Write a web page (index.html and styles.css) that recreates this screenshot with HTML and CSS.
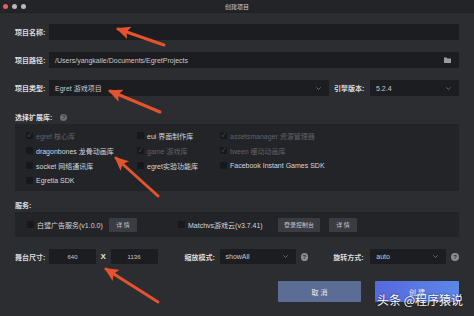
FILE: index.html
```html
<!DOCTYPE html>
<html lang="zh-CN">
<head>
  <meta charset="UTF-8" />
  <meta name="viewport" content="width=device-width, initial-scale=1.0" />
  <title>创建项目</title>
  <link rel="stylesheet" href="styles.css">
</head>
<body>

  <div class="window">

    <!-- Title bar -->
    <div class="titlebar">
      <div class="dots">
        <span class="dot red"></span>
        <span class="dot"></span>
        <span class="dot"></span>
      </div>
      <div class="title">创建项目</div>
      <div></div>
    </div>

    <!-- Form -->
    <div class="form">
      <div class="row">
        <span class="label">项目名称:</span>
        <div class="field"></div>
      </div>

      <div class="row">
        <span class="label">项目路径:</span>
        <div class="field">
          <span class="value">/Users/yangkaile/Documents/EgretProjects</span>
          <svg class="folder" width="7" height="6" viewBox="0 0 7 6"><path d="M0 0.5h2.6l0.8 1H7V6H0z" fill="#9a9ba0"/></svg>
        </div>
      </div>

      <div class="row">
        <span class="label">项目类型:</span>
        <div class="field select">
          <span class="value">Egret 游戏项目</span>
          <svg class="chev" width="5" height="3" viewBox="0 0 5 3"><path d="M0.3 0.3L2.5 2.5L4.7 0.3" fill="none" stroke="#77787d" stroke-width="0.8"/></svg>
        </div>
        <span class="label inline">引擎版本:</span>
        <div class="field select version">
          <span class="value">5.2.4</span>
          <svg class="chev" width="5" height="3" viewBox="0 0 5 3"><path d="M0.3 0.3L2.5 2.5L4.7 0.3" fill="none" stroke="#77787d" stroke-width="0.8"/></svg>
        </div>
      </div>

      <div class="section-title">选择扩展库: <span class="help">?</span></div>
      <div class="box libs">
        <div class="check disabled"><span class="box-tick on">✓</span>egret 核心库</div>
        <div class="check"><span class="box-tick"></span>eui 界面制作库</div>
        <div class="check disabled"><span class="box-tick on">✓</span>assetsmanager 资源管理器</div>

        <div class="check"><span class="box-tick"></span>dragonbones 龙骨动画库</div>
        <div class="check disabled"><span class="box-tick on">✓</span>game 游戏库</div>
        <div class="check disabled"><span class="box-tick on">✓</span>tween 缓动动画库</div>

        <div class="check"><span class="box-tick"></span>socket 网络通讯库</div>
        <div class="check"><span class="box-tick"></span>egret实验功能库</div>
        <div class="check"><span class="box-tick"></span>Facebook Instant Games SDK</div>

        <div class="check"><span class="box-tick"></span>Egretia SDK</div>
      </div>

      <div class="section-title services-title">服务:</div>
      <div class="box services">
        <div class="service first">
          <span class="box-tick"></span>
          <span class="service-name">白鹭广告服务(v1.0.0)</span>
          <button class="small-btn">详 情</button>
        </div>
        <div class="service">
          <span class="box-tick"></span>
          <span class="service-name wide">Matchvs游戏云(v3.7.41)</span>
          <button class="small-btn console">登录控制台</button>
          <button class="small-btn">详 情</button>
        </div>
      </div>

      <div class="row stage">
        <span class="label">舞台尺寸:</span>
        <div class="field size">640</div>
        <span class="times">X</span>
        <div class="field size">1136</div>

        <span class="label scale-label">缩放模式:</span>
        <div class="field select mode">
          <span class="value">showAll</span>
          <svg class="chev" width="5" height="3" viewBox="0 0 5 3"><path d="M0.3 0.3L2.5 2.5L4.7 0.3" fill="none" stroke="#77787d" stroke-width="0.8"/></svg>
        </div>
        <span class="help big">?</span>

        <span class="label rotate-label">旋转方式:</span>
        <div class="field select mode">
          <span class="value">auto</span>
          <svg class="chev" width="5" height="3" viewBox="0 0 5 3"><path d="M0.3 0.3L2.5 2.5L4.7 0.3" fill="none" stroke="#77787d" stroke-width="0.8"/></svg>
        </div>
        <span class="help big">?</span>
      </div>

      <div class="actions">
        <button class="btn cancel">取 消</button>
        <button class="btn create">创 建</button>
      </div>
    </div>

    <!-- Annotation arrows drawn over the screenshot -->
    <svg class="arrows" width="474" height="316" viewBox="0 0 474 316">
      <defs>
        <marker id="head" markerUnits="userSpaceOnUse" markerWidth="15" markerHeight="13" refX="12" refY="6.5" orient="auto">
          <path d="M0 0L14 6.5L0 13L3 6.5z" fill="#e4532d"/>
        </marker>
      </defs>
      <line x1="164" y1="45" x2="118" y2="29" stroke="#e4532d" stroke-width="3" stroke-linecap="round" marker-end="url(#head)"/>
      <line x1="160" y1="112" x2="110" y2="91" stroke="#e4532d" stroke-width="3" stroke-linecap="round" marker-end="url(#head)"/>
      <line x1="158" y1="196" x2="116" y2="158" stroke="#e4532d" stroke-width="3" stroke-linecap="round" marker-end="url(#head)"/>
      <line x1="158" y1="302" x2="106" y2="269" stroke="#e4532d" stroke-width="3" stroke-linecap="round" marker-end="url(#head)"/>
    </svg>

    <div class="watermark">头条 @程序猿说</div>
  </div>

</body>
</html>
```

FILE: styles.css
```css
body {
  margin: 0;
  padding: 0;
  background: #2c2d31;
  font-family: "Liberation Sans", "Noto Sans CJK SC", sans-serif;
  color: #d8d8da;
}

.window {
  position: relative;
  width: 474px;
  height: 316px;
  overflow: hidden;
  background: #2c2d31;
}

.titlebar {
  height: 12px;
  background: #232428;
  display: grid;
  grid-template-columns: 1fr auto 1fr;
  align-items: center;
  border-bottom: 1px solid #1f2023;
}

.dots {
  display: flex;
  gap: 4px;
  padding-left: 3px;
}

.dot {
  width: 5px;
  height: 5px;
  border-radius: 50%;
  background: #b9b9bc;
}

.dot.red {
  background: #e2625d;
}

.title {
  font-size: 6px;
  color: #cfcfd2;
}

.form {
  padding: 0 15px;
}

.row {
  display: flex;
  align-items: center;
  height: 16px;
  margin-top: 12px;
}

.row:first-child {
  margin-top: 11px;
}

.label {
  width: 34px;
  flex: none;
  font-size: 7px;
  font-weight: bold;
  color: #dcdcde;
}

.label.inline {
  width: 36px;
  margin-left: 5px;
}

.field {
  flex: 1;
  height: 100%;
  background: #1c1d21;
  display: flex;
  align-items: center;
  padding: 0 7px 0 6px;
  font-size: 7px;
  color: #c9c9cc;
  box-sizing: border-box;
}

.field .value {
  flex: 1;
}

.folder {
  margin-right: 1px;
}

.chev {
  margin-right: 1px;
}

.field.version {
  flex: none;
  width: 89px;
}

.section-title {
  display: flex;
  align-items: center;
  gap: 8px;
  height: 12px;
  margin-top: 15px;
  font-size: 7px;
  font-weight: bold;
  color: #dcdcde;
}

.section-title.services-title {
  margin-top: 8px;
}

.help {
  width: 7px;
  height: 7px;
  border-radius: 50%;
  background: #6e6f74;
  color: #2c2d31;
  font-size: 5px;
  font-weight: bold;
  display: flex;
  align-items: center;
  justify-content: center;
}

.box {
  margin-top: 1px;
  background: #232428;
}

.libs {
  height: 67px;
  box-sizing: border-box;
  padding: 4px 0 0 11px;
  display: grid;
  grid-template-columns: 111px 83px 1fr;
  grid-auto-rows: 15px;
}

.check {
  display: flex;
  align-items: center;
  gap: 3px;
  font-size: 7px;
  color: #d6d6d8;
}

.check.disabled {
  color: #606166;
}

.box-tick {
  width: 7px;
  height: 7px;
  flex: none;
  background: #17181b;
  border-radius: 1px;
  font-size: 6px;
  line-height: 7px;
  text-align: center;
  color: #5a5b60;
}

.services {
  height: 25px;
  display: flex;
  align-items: center;
  padding-left: 12px;
}

.service {
  display: flex;
  align-items: center;
}

.service.first {
  width: 151px;
}

.service .box-tick {
  margin-right: 3px;
}

.service-name {
  font-size: 7px;
  color: #d6d6d8;
  width: 72px;
}

.service-name.wide {
  width: 90px;
}

.small-btn {
  height: 14px;
  width: 28px;
  border: none;
  border-radius: 1px;
  background: #3b3c41;
  color: #c6c6c9;
  font-family: inherit;
  font-size: 6px;
  padding: 0;
  margin-right: 9px;
}

.small-btn.console {
  width: 42px;
}

.row.stage {
  height: 15px;
  margin-top: 12px;
}

.field.size {
  flex: none;
  width: 47px;
  justify-content: center;
  padding: 0;
  font-size: 6px;
}

.times {
  width: 15px;
  text-align: center;
  font-size: 8px;
  font-weight: bold;
  color: #e0e0e2;
}

.scale-label {
  margin-left: 27px;
  width: 35px;
}

.rotate-label {
  margin-left: 25px;
  width: 37px;
}

.field.mode {
  flex: none;
  width: 76px;
}

.help.big {
  width: 8px;
  height: 8px;
  margin-left: 5px;
  background: #8b8c90;
  font-size: 6px;
}

.actions {
  display: flex;
  justify-content: flex-end;
  gap: 14px;
  margin-top: 17px;
}

.btn {
  height: 21px;
  width: 83px;
  border: none;
  border-radius: 1px;
  color: #e9ecf5;
  font-family: inherit;
  font-size: 7px;
  padding: 0;
}

.btn.cancel {
  background: #5b6d94;
}

.btn.create {
  width: 84px;
  background: linear-gradient(90deg, #5669dc, #5b87e8);
}

.arrows {
  position: absolute;
  left: 0;
  top: 0;
  pointer-events: none;
}

.watermark {
  position: absolute;
  left: 377px;
  top: 291px;
  font-family: "Noto Sans CJK SC", sans-serif;
  font-size: 12px;
  color: #ffffff;
  text-shadow: 0 0 2px rgba(0, 0, 0, 0.8);
  white-space: nowrap;
}
```
